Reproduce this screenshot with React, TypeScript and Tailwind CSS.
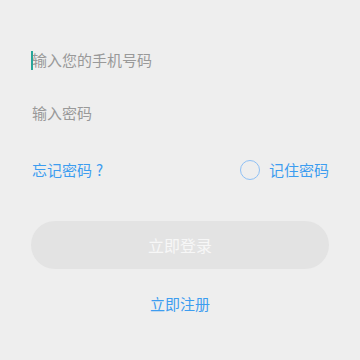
export default function App() {
    return (
        <div
            className="w-[360px] h-[360px] bg-[#eeeeee] px-[31px] pt-[48px] text-[15px]"
            style={{ fontFamily: '"Noto Sans CJK SC", "Noto Sans", sans-serif' }}
        >
            {/* phone input */}
            <div className="h-6 flex items-center">
                <span className="w-[2px] h-[19px] bg-[#26a69a] mr-[-1px]"></span>
                <span className="text-[#999999]">输入您的手机号码</span>
            </div>

            {/* password input */}
            <div className="h-6 flex items-center mt-[29px] pl-[1px]">
                <span className="text-[#999999]">输入密码</span>
            </div>

            <div className="flex items-center justify-between mt-[33px] pl-[1px] h-6">
                <span className="text-[#3d9df0]">
                    忘记密码<span className="ml-[4px]">?</span>
                </span>
                <div className="flex items-center">
                    <span className="w-[20px] h-[20px] rounded-full border-[1.5px] border-[#8ec0f5]"></span>
                    <span className="text-[#3d9df0] ml-[9px]">记住密码</span>
                </div>
            </div>

            <button className="w-[298px] h-[48px] mt-[39px] rounded-full bg-[#e3e3e3] text-[#f7f7f7] text-[16px] flex items-center justify-center">
                立即登录
            </button>

            <div className="text-center text-[#3d9df0] mt-[24px]">立即注册</div>
        </div>
    );
}
